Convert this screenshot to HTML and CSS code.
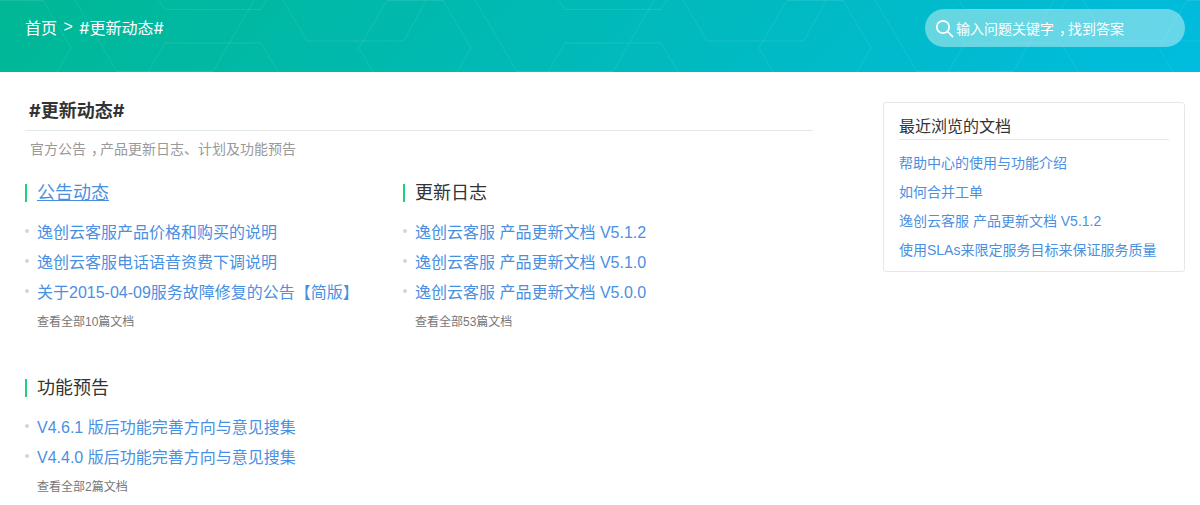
FILE: index.html
```html
<!DOCTYPE html>
<html>

<head>
    <title>#更新动态#</title>
    <link rel="stylesheet" href="styles.css">
</head>

<body>
    <div class="header">
        <svg class="header-bg" width="1200" height="72" aria-hidden="true">
            <defs>
                <g id="hex" fill="none" stroke="#fff" stroke-opacity="0.09">
                    <path d="M-27 72L-41 48L-13 0.5H43L71 48L57 72" />
                    <path d="M75 0L117 71.5H213L254 0" />
                    <path d="M159 0L165 9.5H261L267 0" />
                    <path d="M148 72L165 43H261L278 72" />
                    <path d="M283 0L307 41H404L426 0" />
                </g>
            </defs>
            <use href="#hex" x="0" />
            <use href="#hex" x="400" />
            <use href="#hex" x="800" />
            <use href="#hex" x="1200" />
        </svg>
        <div class="crumbs">
            <a href="#">首页</a>
            <span class="crumb-sep">&gt;</span>
            <span>#更新动态#</span>
        </div>
        <div class="search">
            <svg width="20" height="20" viewBox="0 0 20 20" fill="none" stroke="#fff" stroke-width="1.7">
                <circle cx="8" cy="9" r="6.2" />
                <path d="M12.5 13.5L18 19.2" />
            </svg>
            <span>输入问题关键字<span class="comma">，</span>找到答案</span>
        </div>
    </div>

    <div class="page">
        <div class="main">
            <h1>#更新动态#</h1>
            <p class="desc">官方公告<span class="comma">，</span>产品更新日志、计划及功能预告</p>

            <div class="groups">
                <div class="group">
                    <h2><a href="#" class="active">公告动态</a></h2>
                    <ul>
                        <li><a href="#">逸创云客服产品价格和购买的说明</a></li>
                        <li><a href="#">逸创云客服电话语音资费下调说明</a></li>
                        <li><a href="#">关于2015-04-09服务故障修复的公告【简版】</a></li>
                    </ul>
                    <a href="#" class="more">查看全部10篇文档</a>
                </div>

                <div class="group">
                    <h2>更新日志</h2>
                    <ul>
                        <li><a href="#">逸创云客服 产品更新文档 V5.1.2</a></li>
                        <li><a href="#">逸创云客服 产品更新文档 V5.1.0</a></li>
                        <li><a href="#">逸创云客服 产品更新文档 V5.0.0</a></li>
                    </ul>
                    <a href="#" class="more">查看全部53篇文档</a>
                </div>

                <div class="group">
                    <h2>功能预告</h2>
                    <ul>
                        <li><a href="#">V4.6.1 版后功能完善方向与意见搜集</a></li>
                        <li><a href="#">V4.4.0 版后功能完善方向与意见搜集</a></li>
                    </ul>
                    <a href="#" class="more">查看全部2篇文档</a>
                </div>
            </div>
        </div>

        <div class="side">
            <h3>最近浏览的文档</h3>
            <a href="#">帮助中心的使用与功能介绍</a>
            <a href="#">如何合并工单</a>
            <a href="#">逸创云客服 产品更新文档 V5.1.2</a>
            <a href="#">使用SLAs来限定服务目标来保证服务质量</a>
        </div>
    </div>
</body>

</html>
```

FILE: styles.css
```css
* {
    box-sizing: border-box;
}

body {
    margin: 0;
    font-family: "Liberation Sans", "Noto Sans CJK SC", sans-serif;
    color: #333;
    background: #fff;
}

a {
    color: #4a90e2;
    text-decoration: none;
}

/* the full-width comma sits mid-cell in the original:
   half-width glyph, the rest of the cell as padding */
.comma {
    padding: 0 2px 0 5px;
    font-feature-settings: "halt";
}

.header {
    position: relative;
    display: flex;
    justify-content: space-between;
    height: 72px;
    padding: 9px 15px 0 25px;
    background: linear-gradient(135deg, #00b894, #00bcdf);
    overflow: hidden;
}

.header-bg {
    position: absolute;
    top: 0;
    left: 0;
}

.crumbs {
    position: relative;
    display: flex;
    gap: 6.5px;
    height: 36px;
    align-items: center;
    font-family: Inter, "Noto Sans CJK SC", sans-serif;
    font-size: 16px;
    color: #fff;
}

.crumbs a {
    color: #fff;
}

.crumb-sep {
    font-family: "Liberation Sans", sans-serif;
}

.search {
    position: relative;
    display: flex;
    align-items: center;
    gap: 1px;
    width: 260px;
    height: 38px;
    padding-left: 10px;
    border-radius: 19px;
    background: rgba(255, 255, 255, 0.4);
    font-size: 14px;
    color: #fff;
}

.page {
    display: flex;
    justify-content: space-between;
    padding: 28px 15px 0 25px;
}

.main {
    width: 788px;
}

h1 {
    margin: 0;
    padding: 0 0 5px 4px;
    height: 31px;
    border-bottom: 1px solid #e3e8e8;
    font-family: Inter, "Noto Sans CJK SC", sans-serif;
    font-size: 18px;
    line-height: 22px;
    font-weight: bold;
}

.desc {
    margin: 0;
    padding: 8px 0 0 5px;
    font-size: 14px;
    line-height: 20px;
    color: #999;
}

.groups {
    display: grid;
    grid-template-columns: 378px 378px;
    row-gap: 43px;
    padding-top: 25px;
}

.group h2 {
    margin: 0;
    padding-left: 10px;
    height: 18px;
    border-left: 2px solid #1fcf7c;
    font-size: 18px;
    line-height: 18px;
    font-weight: normal;
}

.group h2 .active {
    text-decoration: underline;
}

.group ul {
    margin: 0;
    padding: 16px 0 0;
    list-style: none;
}

.group li {
    display: flex;
    height: 30px;
    font-size: 16px;
    line-height: 29px;
}

.group li::before {
    content: "";
    flex: none;
    width: 4px;
    height: 4px;
    margin: 11px 8px 0 0;
    border-radius: 50%;
    background: #d2d5de;
}

.more {
    display: block;
    padding-left: 12px;
    font-size: 12px;
    line-height: 28px;
    color: #777;
}

.side {
    display: flex;
    flex-direction: column;
    width: 302px;
    height: 170px;
    margin-top: 2px;
    padding: 12px 15px 0;
    border: 1px solid #e4e8e8;
    border-radius: 3px;
}

.side h3 {
    margin: 0 0 9px;
    height: 25px;
    border-bottom: 1px solid #e4e8e8;
    font-size: 16px;
    line-height: 24px;
    font-weight: normal;
}

.side a {
    height: 29px;
    font-size: 14px;
    line-height: 29px;
}
```
